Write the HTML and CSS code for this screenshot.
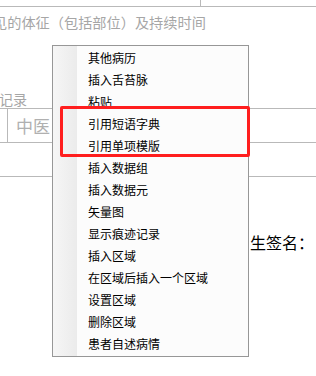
FILE: index.html
```html
<!DOCTYPE html>
<html lang="zh-CN">
<head>
    <meta charset="UTF-8">
    <title>病历编辑 - 右键菜单</title>
    <link rel="stylesheet" href="styles.css">
</head>
<body>
    <div class="doc">
        <div class="top-row">
            <div class="top-cell"></div>
        </div>
        <p class="desc">见的体征（包括部位）及持续时间</p>
        <p class="section-title">记录</p>
        <div class="table-row">
            <div class="cell-gap"></div>
            <div class="cell-label">中医</div>
        </div>
        <div class="table-row empty"></div>
        <p class="sign">生签名：</p>
    </div>

    <ul class="context-menu">
        <li>其他病历</li>
        <li>插入舌苔脉</li>
        <li>粘贴</li>
        <li>引用短语字典</li>
        <li>引用单项模版</li>
        <li>插入数据组</li>
        <li>插入数据元</li>
        <li>矢量图</li>
        <li>显示痕迹记录</li>
        <li>插入区域</li>
        <li>在区域后插入一个区域</li>
        <li>设置区域</li>
        <li>删除区域</li>
        <li>患者自述病情</li>
    </ul>
    <div class="highlight"></div>
</body>
</html>
```

FILE: styles.css
```css
body {
    margin: 0;
    width: 316px;
    height: 376px;
    overflow: hidden;
    position: relative;
    background: #ffffff;
    font-family: "Noto Sans CJK SC", "Noto Sans", sans-serif;
}
.doc {
    display: flex;
    flex-direction: column;
}
.top-row {
    height: 6px;
    border-bottom: 1px solid #b9b9b9;
}
.top-cell {
    width: 200px;
    height: 6px;
    border-right: 1px solid #b9b9b9;
}
.desc {
    margin: 5px 0 0 -7px;
    font-size: 14.2px;
    line-height: 20px;
    color: #a6a6a6;
    white-space: nowrap;
}
.section-title {
    margin: 58px 0 0 -1px;
    font-size: 14px;
    line-height: 18px;
    color: #a6a6a6;
}
.table-row {
    display: flex;
    height: 33px;
    border-top: 1px solid #b9b9b9;
}
.table-row.empty {
    border-bottom: 1px solid #b9b9b9;
}
.cell-gap {
    width: 7px;
    border-right: 1px solid #b9b9b9;
}
.cell-label {
    padding-left: 8px;
    font-size: 17px;
    line-height: 33px;
    color: #b0b0b0;
}
.sign {
    margin: 54px 0 0 250px;
    font-size: 16px;
    line-height: 22px;
    color: #000;
    white-space: nowrap;
}
.context-menu {
    position: absolute;
    left: 52px;
    top: 45px;
    width: 195px;
    margin: 0;
    padding: 1px 0;
    list-style: none;
    border: 1px solid #979797;
    background: linear-gradient(to right, #f6f6f6, #ebebeb 24px, #fcfcfc 24px);
}
.context-menu li {
    height: 22px;
    line-height: 22px;
    padding-left: 35px;
    font-size: 12px;
    color: #000;
}
.highlight {
    position: absolute;
    left: 60px;
    top: 106px;
    width: 184px;
    height: 45px;
    border: 3px solid #ff1e1e;
    border-radius: 2px;
}
```
